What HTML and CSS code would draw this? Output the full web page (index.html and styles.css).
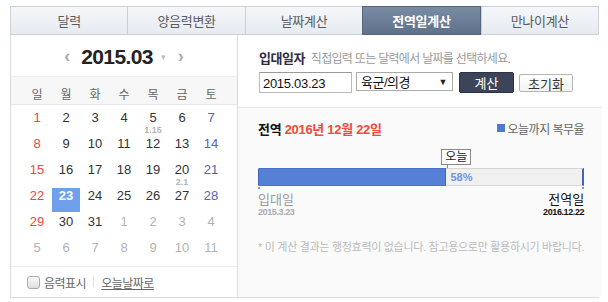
FILE: index.html
```html
<!DOCTYPE html>
<html lang="ko">
<head>
<meta charset="utf-8">
<link rel="stylesheet" href="styles.css">
</head>
<body>
<div class="wrap">
  <div class="tabs">
    <div class="tab">달력</div>
    <div class="tab">양음력변환</div>
    <div class="tab">날짜계산</div>
    <div class="tab active">전역일계산</div>
    <div class="tab">만나이계산</div>
  </div>
  <div class="main">
    <div class="cal">
      <div class="cal-head">
        <span class="arr">‹</span>
        <span class="ym">2015.03</span>
        <span class="dd">▾</span>
        <span class="arr">›</span>
      </div>
      <div class="weekdays">
        <span>일</span><span>월</span><span>화</span><span>수</span><span>목</span><span>금</span><span>토</span>
      </div>
      <div class="days">
        <div class="d sun">1</div><div class="d">2</div><div class="d">3</div><div class="d">4</div><div class="d">5<i>1.15</i></div><div class="d">6</div><div class="d sat">7</div>
        <div class="d sun">8</div><div class="d">9</div><div class="d">10</div><div class="d">11</div><div class="d">12</div><div class="d">13</div><div class="d sat">14</div>
        <div class="d sun">15</div><div class="d">16</div><div class="d">17</div><div class="d">18</div><div class="d">19</div><div class="d">20<i>2.1</i></div><div class="d sat">21</div>
        <div class="d sun">22</div><div class="d sel">23</div><div class="d">24</div><div class="d">25</div><div class="d">26</div><div class="d">27</div><div class="d sat">28</div>
        <div class="d sun">29</div><div class="d">30</div><div class="d">31</div><div class="d o">1</div><div class="d o">2</div><div class="d o">3</div><div class="d o">4</div>
        <div class="d o">5</div><div class="d o">6</div><div class="d o">7</div><div class="d o">8</div><div class="d o">9</div><div class="d o">10</div><div class="d o">11</div>
      </div>
      <div class="cal-foot">
        <span class="chk"></span><span class="lab">음력표시</span><span class="bar-sep"></span><span class="today">오늘날짜로</span>
      </div>
    </div>
    <div class="calc">
      <div class="form">
        <div class="form-title"><b>입대일자</b><span>직접입력 또는 달력에서 날짜를 선택하세요.</span></div>
        <div class="form-row">
          <div class="inp">2015.03.23</div>
          <div class="sel-box"><span>육군/의경</span><span class="tri">▼</span></div>
          <div class="btn dark">계산</div>
          <div class="btn light">초기화</div>
        </div>
      </div>
      <div class="result">
        <div class="res-head">
          <div class="res-title"><b class="k">전역</b> <b class="red">2016년 12월 22일</b></div>
          <div class="legend"><span class="sq"></span>오늘까지 복무율</div>
        </div>
        <div class="prog">
          <div class="tag" style="left:58%">오늘</div>
          <div class="track">
            <div class="fill" style="width:58%"></div>
            <span class="pct">58%</span>
          </div>
        </div>
        <div class="ends">
          <div class="end"><div class="en">입대일</div><div class="ed">2015.3.23</div></div>
          <div class="end r"><div class="en">전역일</div><div class="ed">2016.12.22</div></div>
        </div>
        <div class="note">* 이 계산 결과는 행정효력이 없습니다. 참고용으로만 활용하시기 바랍니다.</div>
      </div>
    </div>
  </div>
</div>
</body>
</html>
```

FILE: styles.css
```css
* { box-sizing: border-box; }
body {
  margin: 0;
  background: #fff;
  font-family: "Liberation Sans", "Noto Sans CJK KR", sans-serif;
  color: #333;
}
.wrap {
  margin: 6px 0 0 10px;
  width: 589px;
}
.tabs {
  display: flex;
  height: 29px;
  border: 1px solid #c9d0d8;
  background: linear-gradient(#f4f7fa, #e6ebf1);
}
.tab {
  flex: 1;
  display: flex;
  align-items: center;
  justify-content: center;
  font-size: 13px;
  color: #5a5a5a;
  border-left: 1px solid #c9d0d8;
  letter-spacing: -0.3px;
}
.tab:first-child { border-left: 0; }
.tab.active {
  background: linear-gradient(#7a8ca4, #5f718a);
  color: #fff;
  font-weight: bold;
  margin: -1px 0;
  border: 1px solid #56657a;
}
.main {
  display: flex;
  height: 263px;
  border: 1px solid #dcdcdc;
  border-top: 0;
}
.cal {
  width: 227px;
  border-right: 1px solid #dcdcdc;
  display: flex;
  flex-direction: column;
}
.cal-head {
  height: 42px;
  border-bottom: 1px solid #eeeeee;
  display: flex;
  align-items: center;
  justify-content: center;
  padding-top: 2px;
}
.ym {
  font-size: 21px;
  font-weight: bold;
  color: #222;
  letter-spacing: -0.6px;
  margin: 0 8px 0 9px;
}
.arr {
  font-size: 18px;
  color: #aaa;
  font-weight: bold;
  margin: 0 2px;
}
.dd {
  font-size: 9px;
  color: #bbb;
  margin-right: 10px;
}
.weekdays {
  height: 28px;
  background: #f7f7f7;
  border-bottom: 1px solid #e8e8e8;
  display: grid;
  grid-template-columns: repeat(7, 28px);
  column-gap: 1px;
  padding: 5px 12px 0;
  align-items: center;
}
.weekdays span {
  text-align: center;
  font-size: 12px;
  color: #666;
}
.days {
  display: grid;
  grid-template-columns: repeat(7, 28px);
  grid-auto-rows: 24px;
  column-gap: 1px;
  row-gap: 2px;
  padding: 5px 12px 1px;
}
.d {
  position: relative;
  text-align: center;
  font-size: 13px;
  line-height: 15px;
  color: #333;
  font-family: "Liberation Sans", sans-serif;
}
.d i {
  position: absolute;
  left: 0;
  right: 0;
  top: 15px;
  font-style: normal;
  font-size: 9px;
  line-height: 10px;
  font-weight: bold;
  color: #b5b5b5;
}
.d.sun { color: #f04545; }
.d.sat { color: #5563b0; }
.d.o { color: #b3b3b3; }
.d.sel {
  background: #6ea0eb;
  color: #fff;
  font-weight: bold;
}
.cal-foot {
  border-top: 1px solid #efefef;
  margin-top: 1px;
  flex: 1;
  display: flex;
  align-items: center;
  padding-left: 16px;
  font-size: 12px;
  color: #666;
}
.chk {
  width: 13px;
  height: 13px;
  border: 1px solid #aaa;
  border-radius: 3px;
  background: linear-gradient(#fafafa, #dedede);
  margin-right: 4px;
}
.lab { letter-spacing: -0.5px; }
.bar-sep {
  width: 1px;
  height: 10px;
  background: #ddd;
  margin: 0 7px;
}
.today {
  text-decoration: underline;
  letter-spacing: -0.5px;
}
.calc {
  flex: 1;
  display: flex;
  flex-direction: column;
}
.form {
  height: 73px;
  border-bottom: 1px solid #e8e8e8;
  padding: 13px 0 0 21px;
  background: #fff;
}
.form-title {
  display: flex;
  align-items: baseline;
  height: 18px;
}
.form-title b {
  font-size: 13px;
  color: #2d2b45;
  letter-spacing: -0.5px;
}
.form-title span {
  font-size: 12px;
  color: #999;
  margin-left: 6px;
  letter-spacing: -0.7px;
}
.form-row {
  display: flex;
  margin-top: 6px;
  align-items: flex-start;
}
.inp {
  width: 93px;
  height: 21px;
  border: 1px solid #bbb;
  border-top-color: #999;
  font-size: 13px;
  line-height: 21px;
  padding-left: 3px;
  color: #111;
  letter-spacing: -0.3px;
}
.sel-box {
  width: 97px;
  height: 19px;
  border: 1px solid #aaa;
  margin-left: 4px;
  display: flex;
  justify-content: space-between;
  align-items: center;
  padding: 0 5px 0 4px;
  font-size: 13px;
  color: #111;
  letter-spacing: -0.5px;
}
.tri { font-size: 9px; color: #222; }
.btn {
  height: 21px;
  display: flex;
  align-items: center;
  justify-content: center;
  font-size: 13px;
  border-radius: 2px;
}
.btn.dark {
  width: 55px;
  margin-left: 6px;
  background: #3c4459;
  color: #fff;
  border: 1px solid #2c3244;
}
.btn.light {
  width: 54px;
  margin-left: 5px;
  margin-top: 2px;
  height: 18px;
  background: linear-gradient(#fff, #f2f2f2);
  border: 1px solid #b5b5b5;
  color: #333;
}
.result {
  flex: 1;
  background: #fafafa;
  padding: 12px 18px 0 20px;
}
.res-head {
  display: flex;
  justify-content: space-between;
  align-items: center;
  height: 16px;
}
.res-title { font-size: 13px; letter-spacing: -0.3px; }
.res-title .k { color: #111; }
.res-title .red { color: #f4473a; }
.legend {
  display: flex;
  align-items: center;
  font-size: 12px;
  color: #666;
  letter-spacing: -0.5px;
}
.sq {
  width: 8px;
  height: 8px;
  background: #4f78d3;
  margin-right: 3px;
}
.prog {
  position: relative;
  margin-top: 13px;
  padding-top: 19px;
}
.tag {
  position: absolute;
  top: 0;
  transform: translateX(-6px);
  height: 16px;
  padding: 0 3px;
  border: 1px solid #8a8a8a;
  background: #fff;
  font-size: 12px;
  line-height: 14px;
  color: #222;
}
.tag::after {
  content: "";
  position: absolute;
  left: 5px;
  top: 15px;
  width: 1px;
  height: 4px;
  background: #8a8a8a;
}
.track {
  position: relative;
  height: 18px;
  background: #f0f0f0;
  border: 1px solid #d6d6d6;
  border-left: 1px solid #3f64c0;
  border-right: 2px solid #3f64c0;
  display: flex;
  align-items: center;
}
.track::before, .track::after {
  content: "";
  position: absolute;
  top: 18px;
  width: 2px;
  height: 2px;
  background: #7b97d8;
}
.track::before { left: -1px; }
.track::after { right: -2px; }
.fill {
  height: 18px;
  margin-top: -1px;
  margin-bottom: -1px;
  background: #5580d6;
  border-right: 1px solid #3f64c0;
  border-top: 1px solid #4a72cc;
  border-bottom: 1px solid #4a72cc;
}
.pct {
  font-size: 11px;
  color: #7090e0;
  margin-left: 4px;
  font-weight: bold;
}
.ends {
  display: flex;
  justify-content: space-between;
  margin-top: 7px;
}
.en {
  font-size: 13px;
  line-height: 14px;
  color: #9a9a9a;
}
.ed {
  font-size: 9px;
  line-height: 11px;
  color: #aaa;
  font-weight: bold;
  letter-spacing: -0.4px;
}
.end.r { text-align: right; }
.end.r .en, .end.r .ed { color: #111; }
.note {
  margin-top: 20px;
  font-size: 11px;
  color: #bbb;
  letter-spacing: -0.3px;
  white-space: nowrap;
}
```
